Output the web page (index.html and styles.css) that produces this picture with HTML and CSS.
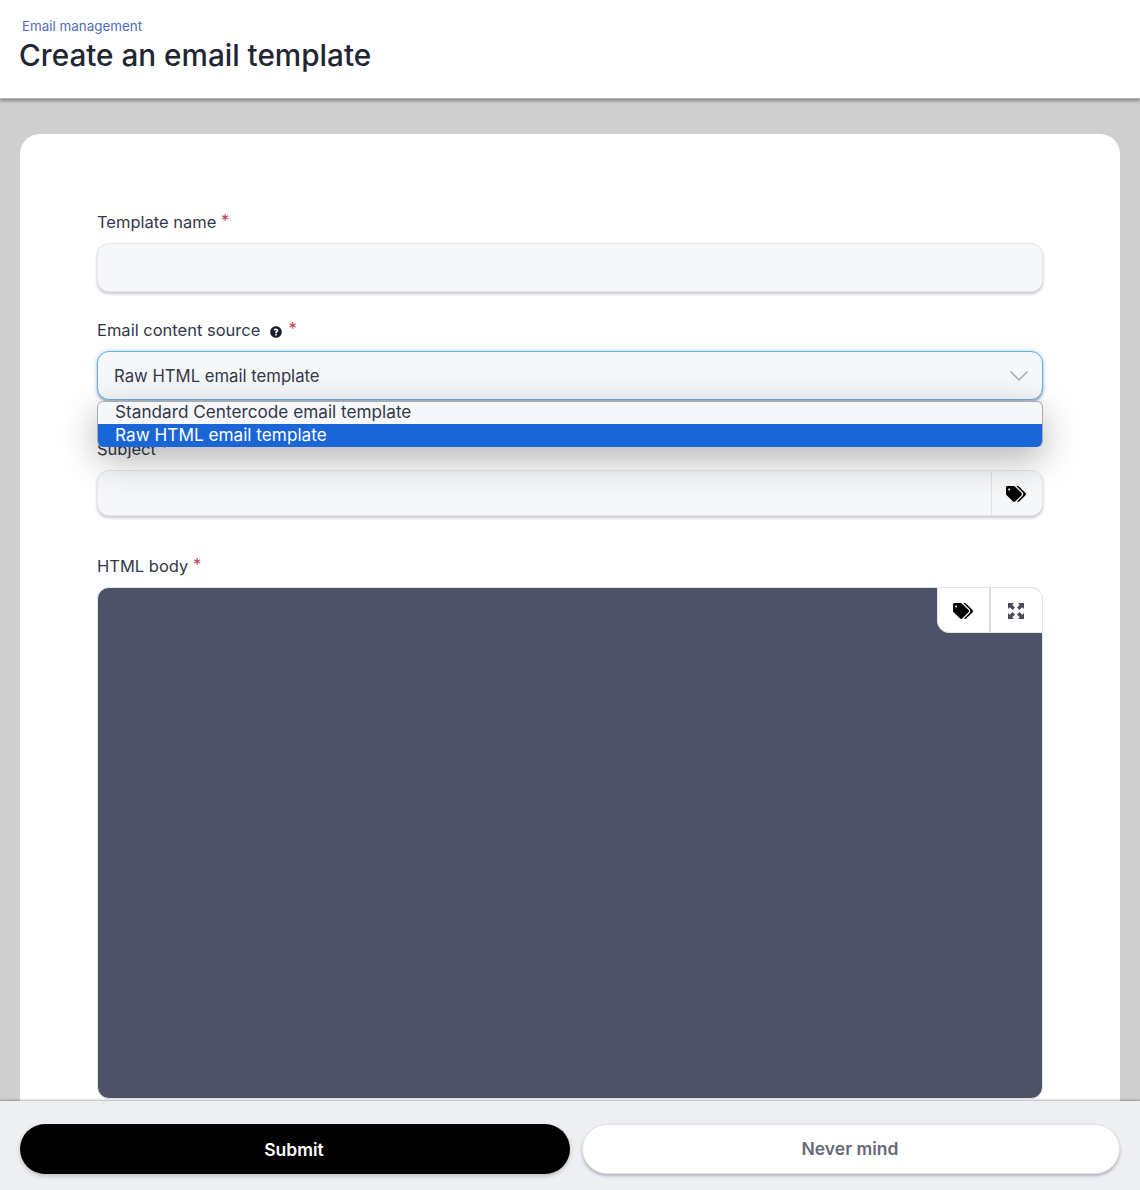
FILE: index.html
```html
<!DOCTYPE html>
<html lang="en">
<head>
    <meta charset="UTF-8">
    <title>Create an email template</title>
    <link rel="stylesheet" href="styles.css">
</head>
<body>
    <div class="page">
        <header class="page-header">
            <a href="#" class="breadcrumb">Email management</a>
            <h1>Create an email template</h1>
        </header>

        <main class="page-body">
            <form class="card">
                <div class="field field-name">
                    <label class="field-label">Template name <span class="required">*</span></label>
                    <div class="input"></div>
                </div>

                <div class="field field-source">
                    <label class="field-label">Email content source
                        <svg class="help-icon" viewBox="0 0 512 512"><path d="M256 8C119 8 8 119 8 256s111 248 248 248 248-111 248-248S393 8 256 8zm0 408a40 40 0 1 1 0-80 40 40 0 0 1 0 80zm38-134v14c0 6-5 12-12 12h-52c-7 0-12-6-12-12v-20c0-32 24-45 43-55 16-9 26-15 26-27 0-16-20-26-36-26-21 0-30 10-44 27-4 5-11 6-16 2l-32-24c-5-4-6-11-3-16 23-34 53-53 99-53 48 0 100 38 100 87 0 65-61 66-61 91z"/></svg>
                        <span class="required">*</span></label>
                    <div class="select-wrap">
                        <div class="select">
                            <span>Raw HTML email template</span>
                            <svg class="chevron" viewBox="0 0 20 12"><path d="M1.5 1.5 10 10l8.500-8.500"/></svg>
                        </div>
                        <ul class="select-menu">
                            <li>Standard Centercode email template</li>
                            <li class="selected">Raw HTML email template</li>
                        </ul>
                    </div>
                </div>

                <div class="field field-subject">
                    <label class="field-label">Subject <span class="required">*</span></label>
                    <div class="input input-addon">
                        <div class="addon">
                            <svg class="tag-icon" viewBox="0 0 640 512"><path d="M497.900 225.900 286.100 14.100A48 48 0 0 0 252.100 0H48C21.500 0 0 21.500 0 48v204.100a48 48 0 0 0 14.100 33.900l211.900 211.900c18.700 18.700 49.100 18.700 67.900 0l204.100-204.100c18.700-18.700 18.700-49.100-.1-67.900zM100 140a32 32 0 1 1 0-64 32 32 0 0 1 0 64zm525.900 153.800L421.800 497.900c-18.700 18.700-49.100 18.700-67.900 0l-.4-.4L527.600 323.500c17-17 26.400-39.600 26.400-63.600s-9.400-46.600-26.400-63.600L331.400 0h48.700a48 48 0 0 1 33.900 14.100l211.900 211.800c18.700 18.700 18.700 49.100 0 67.900z"/></svg>
                        </div>
                    </div>
                </div>

                <div class="field">
                    <label class="field-label">HTML body <span class="required">*</span></label>
                    <div class="editor">
                        <div class="editor-tools">
                            <div class="tool">
                                <svg class="tag-icon" viewBox="0 0 640 512"><path d="M497.900 225.900 286.100 14.100A48 48 0 0 0 252.100 0H48C21.500 0 0 21.500 0 48v204.100a48 48 0 0 0 14.100 33.900l211.900 211.900c18.700 18.700 49.100 18.700 67.900 0l204.100-204.100c18.700-18.700 18.700-49.100-.1-67.900zM100 140a32 32 0 1 1 0-64 32 32 0 0 1 0 64zm525.900 153.800L421.800 497.900c-18.700 18.700-49.100 18.700-67.900 0l-.4-.4L527.600 323.500c17-17 26.400-39.600 26.400-63.600s-9.400-46.600-26.400-63.600L331.400 0h48.700a48 48 0 0 1 33.900 14.100l211.900 211.800c18.700 18.700 18.700 49.100 0 67.900z"/></svg>
                            </div>
                            <div class="tool">
                                <svg class="expand-icon" viewBox="0 0 16 16"><path d="M0 0h6L4.200 1.800 7 4.600 4.600 7 1.800 4.200 0 6zM16 0v6l-1.800-1.800L11.400 7 9 4.600l2.800-2.800L10 0zM0 16v-6l1.800 1.800L4.600 9 7 11.400l-2.800 2.800L6 16zM16 16h-6l1.800-1.800L9 11.400 11.400 9l2.800 2.800L16 10z"/></svg>
                            </div>
                        </div>
                    </div>
                </div>
            </form>
        </main>

        <footer class="page-footer">
            <button type="button" class="button button-black">Submit</button>
            <button type="button" class="button button-white">Never mind</button>
        </footer>
    </div>
</body>
</html>
```

FILE: styles.css
```css
html, body {
    margin: 0;
    height: 100%;
}
body {
    font-family: Inter, "Noto Sans", sans-serif;
    color: #2b2f3c;
}
.page {
    height: 100vh;
    display: flex;
    flex-direction: column;
    overflow: hidden;
    background-color: #cfcfcf;
}
.page-header {
    flex: none;
    height: 99px;
    box-sizing: border-box;
    padding: 18px 20px 0;
    background-color: #fff;
    border-bottom: 1px solid #b5b5b5;
    box-shadow: 0 2px 3px rgba(0, 0, 0, 0.35);
    position: relative;
    z-index: 1;
}
.breadcrumb {
    display: block;
    margin-left: 2px;
    font-size: 13.4px;
    line-height: 16px;
    color: #4f6cb8;
    text-decoration: none;
}
h1 {
    margin: 3px 0 0 -1px;
    font-size: 29.700px;
    line-height: 36px;
    font-weight: 500;
    color: #222633;
}
.page-body {
    flex: 1;
    min-height: 0;
    padding: 35px 20px 0;
}
.card {
    background-color: #fff;
    border-radius: 20px;
    padding: 77px 77px 40px;
}
.field {
    margin-bottom: 26px;
}
.field-label {
    display: block;
    font-size: 16.5px;
    line-height: 22px;
    margin-bottom: 10px;
    color: #33374a;
}
.field-name {
    margin-bottom: 27px;
}
.field-source {
    margin-bottom: 0;
    height: 119px;
}
.field-subject {
    margin-bottom: 39px;
}
.required {
    color: #c2455a;
    line-height: 0;
    vertical-align: 2px;
}
.help-icon {
    width: 12px;
    height: 12px;
    margin: 0 2px 0 5px;
    vertical-align: -2px;
    fill: #1c1f2b;
}
.input {
    height: 49px;
    box-sizing: border-box;
    background-color: #f6f7f9;
    border: 1px solid #e6e7ec;
    border-radius: 12px;
    box-shadow: 0 2px 3px rgba(40, 44, 60, 0.25);
}
.input-addon {
    height: 46px;
    display: flex;
    justify-content: flex-end;
}
.addon {
    width: 51px;
    box-sizing: border-box;
    padding: 2px 2px 0 0;
    display: flex;
    align-items: center;
    justify-content: center;
    border-left: 1px solid #e0e1e6;
}
.tag-icon {
    width: 20px;
    height: 16px;
    fill: #000;
}
.expand-icon {
    width: 16px;
    height: 16px;
    fill: #4a4c55;
}
.select-wrap {
    position: relative;
}
.select {
    height: 49px;
    box-sizing: border-box;
    padding: 0 13px 0 16px;
    display: flex;
    align-items: center;
    justify-content: space-between;
    background-color: #f6f7f9;
    border: 1px solid #6aaee0;
    border-radius: 12px;
    box-shadow: 0 0 4px rgba(90, 170, 230, 0.5), 0 2px 2px rgba(40, 44, 60, 0.3);
    font-size: 16.7px;
    color: #33374a;
}
.chevron {
    width: 20px;
    height: 12px;
    fill: none;
    stroke: #a8abb5;
    stroke-width: 1.5;
}
.select-menu {
    position: absolute;
    top: 50px;
    left: 0;
    right: 0;
    margin: 0;
    padding: 0;
    list-style: none;
    background-color: #f6f7f9;
    border: 1px solid #a9abb2;
    border-bottom: none;
    border-radius: 6px;
    overflow: hidden;
    box-shadow: 0 12px 36px rgba(0, 0, 0, 0.3);
    font-size: 17.2px;
    color: #33374a;
    z-index: 2;
}
.select-menu li {
    height: 22px;
    line-height: 20px;
    padding-left: 17px;
}
.select-menu li.selected {
    height: 23px;
    line-height: 22px;
    background-color: #1a66d6;
    color: #fff;
}
.editor {
    height: 512px;
    box-sizing: border-box;
    position: relative;
    background-color: #4e5266;
    border: 1px solid #e4e5ea;
    border-radius: 12px;
}
.editor-tools {
    position: absolute;
    top: -1px;
    right: -1px;
    display: flex;
    background-color: #fff;
    border: 1px solid #e4e5ea;
    border-top-right-radius: 12px;
    border-bottom-left-radius: 12px;
}
.tool {
    width: 51px;
    height: 44px;
    box-sizing: border-box;
    padding: 2px 2px 0 0;
    display: flex;
    align-items: center;
    justify-content: center;
}
.tool + .tool {
    width: 53px;
    border-left: 2px solid #dcdde2;
}
.page-footer {
    flex: none;
    height: 89px;
    box-sizing: border-box;
    padding: 23px 20px 0;
    display: grid;
    grid-template-columns: 550fr 538fr;
    gap: 12px;
    background-color: #eeeff3;
    box-shadow: 0 -1px 2px rgba(0, 0, 0, 0.3);
    position: relative;
    z-index: 1;
}
.button {
    height: 50px;
    border: none;
    border-radius: 25px;
    padding: 0 8px 0 6px;
    font-family: inherit;
    font-size: 17.5px;
    font-weight: 600;
    cursor: pointer;
}
.button-black {
    background-color: #000;
    color: #fff;
    box-shadow: 0 2px 4px rgba(40, 44, 60, 0.25);
}
.button-white {
    padding-bottom: 2px;
    background-color: #fff;
    color: #666a78;
    border: 1px solid #e2e3e8;
    box-shadow: 0 2px 3px rgba(40, 44, 60, 0.3);
}
```
